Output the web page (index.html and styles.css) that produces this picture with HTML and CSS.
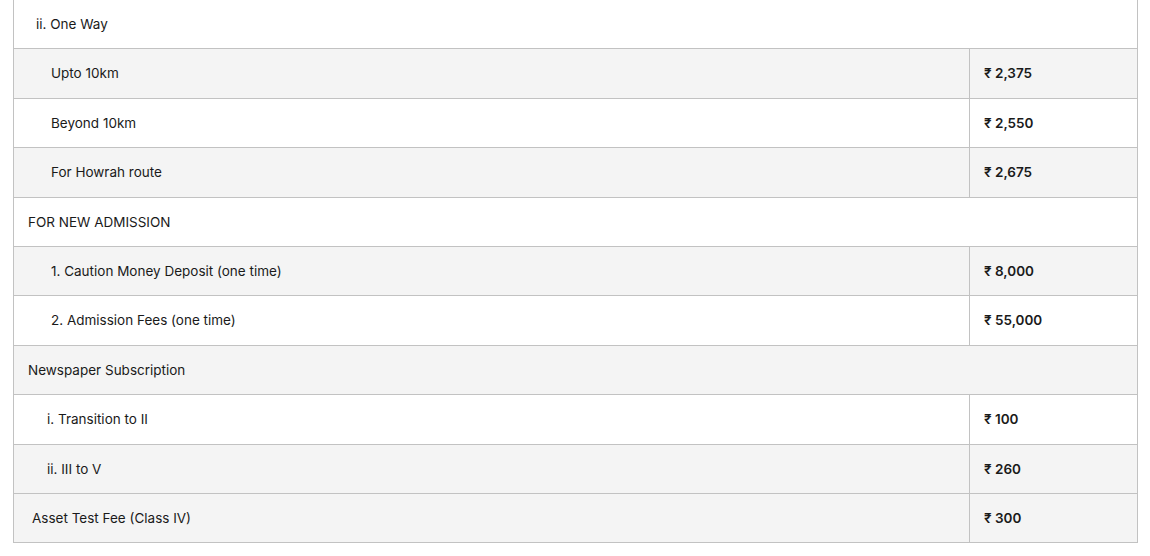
FILE: index.html
```html
<!DOCTYPE html>
<html lang="en">
<head>
<meta charset="utf-8">
<title>Fee Table</title>
<link rel="stylesheet" href="styles.css">
</head>
<body>
<div class="wrap">
<table class="fees">
  <colgroup><col class="c-label"><col class="c-amt"></colgroup>
  <tbody>
    <tr class="white"><td colspan="2" class="ind-2">ii. One Way</td></tr>
    <tr class="gray"><td class="ind-4">Upto 10km</td><td class="amt">₹ 2,375</td></tr>
    <tr class="white"><td class="ind-4">Beyond 10km</td><td class="amt">₹ 2,550</td></tr>
    <tr class="gray"><td class="ind-4">For Howrah route</td><td class="amt">₹ 2,675</td></tr>
    <tr class="white"><td colspan="2">FOR NEW ADMISSION</td></tr>
    <tr class="gray"><td class="ind-4">1. Caution Money Deposit (one time)</td><td class="amt">₹ 8,000</td></tr>
    <tr class="white"><td class="ind-4">2. Admission Fees (one time)</td><td class="amt">₹ 55,000</td></tr>
    <tr class="gray"><td colspan="2">Newspaper Subscription</td></tr>
    <tr class="white"><td class="ind-3">i. Transition to II</td><td class="amt">₹ 100</td></tr>
    <tr class="gray"><td class="ind-3">ii. III to V</td><td class="amt">₹ 260</td></tr>
    <tr class="gray dark-top"><td class="ind-1">Asset Test Fee (Class IV)</td><td class="amt">₹ 300</td></tr>
  </tbody>
</table>
</div>
</body>
</html>
```
FILE: styles.css
```css
html, body {
  margin: 0;
  padding: 0;
  background: #ffffff;
}
body {
  font-family: Inter, "Liberation Sans", Arial, sans-serif;
  font-size: 13.5px;
  color: #1a1a1a;
}
.wrap {
  padding: 0 12px 0 13px;
  margin-top: -1px;
}
.fees {
  width: 1124px;
  border-collapse: collapse;
  table-layout: fixed;
}
.c-label { width: 956px; }
.c-amt { width: 168px; }
.fees td {
  border: 1px solid #c2c2c2;
  padding: 14px 14px 14px 14px;
  line-height: 20.4px;
  text-align: left;
  vertical-align: middle;
}
.white td { background: #ffffff; }
.gray td { background: #f4f4f4; }
.dark-top td { border-top-color: #9a9a9a; }
.ind-1 { padding-left: 18px !important; }
.ind-2 { padding-left: 22px !important; }
.ind-3 { padding-left: 33px !important; }
.ind-4 { padding-left: 37px !important; }
.amt { font-weight: 600; }
```
